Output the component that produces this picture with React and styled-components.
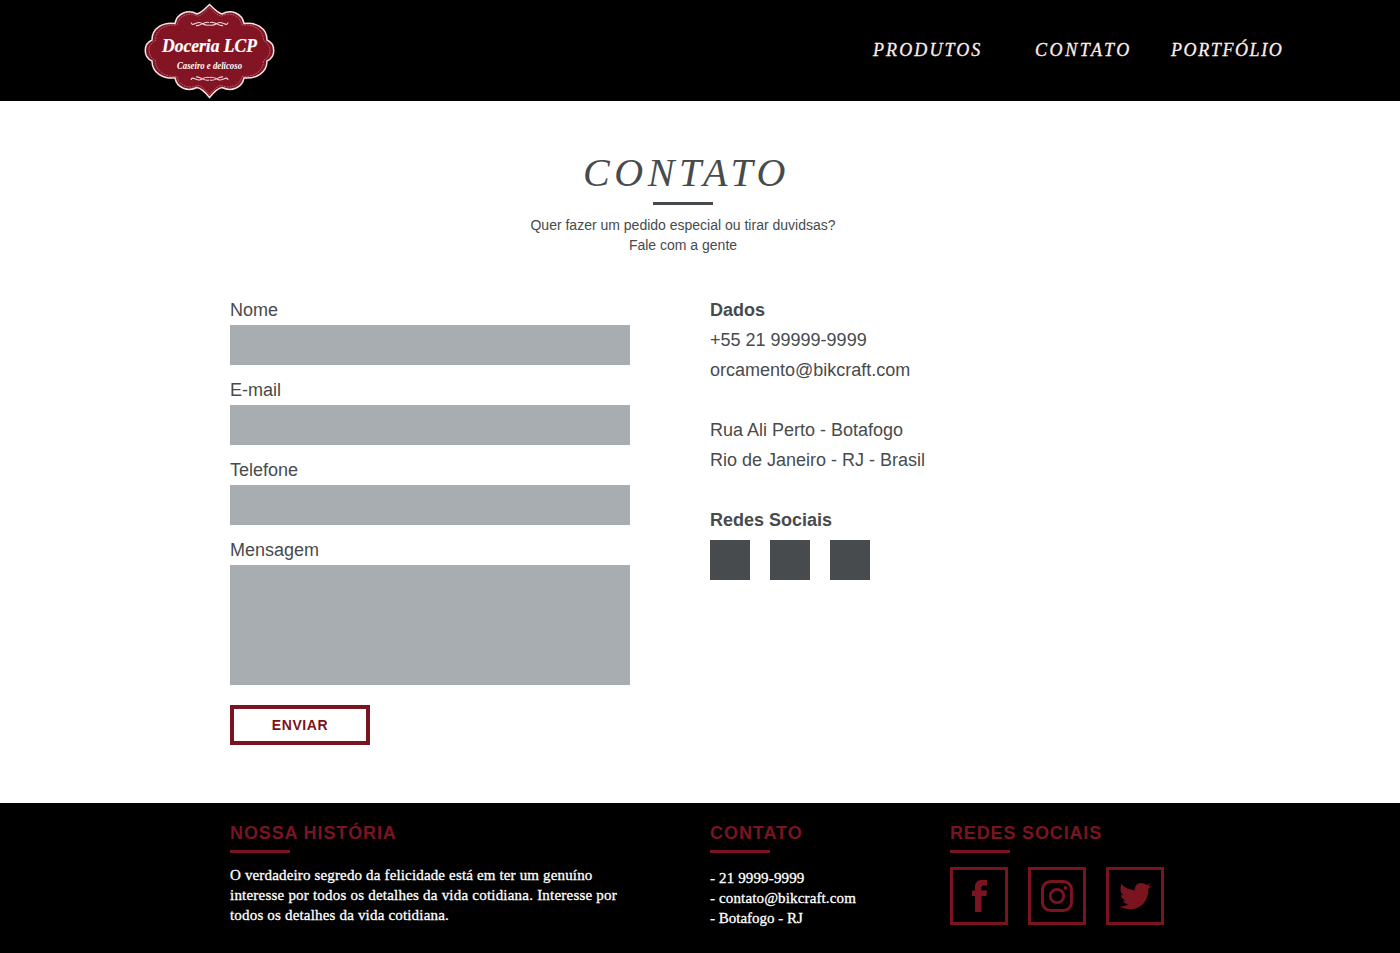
import React from "react";
import styled, { createGlobalStyle } from "styled-components";

const wine = "#7b1421";
const ink = "#474b4d";

const Global = createGlobalStyle`
  * { box-sizing: border-box; margin: 0; padding: 0; }
  body { background: #fff; font-family: "Liberation Sans", Arial, sans-serif; color: ${ink}; }
`;
const Page = styled.div`
  width: 1400px; height: 953px; overflow: hidden;
  display: flex; flex-direction: column;
`;
const Header = styled.header`
  height: 101px; background: #000; display: flex; align-items: flex-start;
  justify-content: space-between; padding: 0 117px 0 143px;
`;
const Logo = styled.svg`
  display: block; width: 133px; height: 100px;
`;
const Nav = styled.nav`
  display: flex; padding-top: 39px;
`;
const NavLink = styled.a`
  width: ${(p) => p.$width}px;
  font: italic 18px/22px "Lucida Calligraphy", "Liberation Serif", serif;
  letter-spacing: ${(p) => p.$spacing}px; padding-left: 1px;
  color: #fdecec; -webkit-text-stroke: 0.3px #fdecec; white-space: nowrap;
`;
const Main = styled.main`
  height: 702px;
`;
const Intro = styled.section`
  width: 400px; margin-left: 483px; padding-top: 45px; height: 194px;
  display: flex; flex-direction: column; align-items: center;
`;
const Title = styled.h1`
  font: italic 400 40px/54px "Lucida Calligraphy", "Liberation Serif", serif;
  letter-spacing: 4.6px; padding-left: 7px; margin-bottom: 2px; white-space: nowrap;
`;
const Rule = styled.div`
  width: 60px; height: 3px; background: ${(p) => p.$color};
`;
const Lead = styled.p`
  font-size: 14px; line-height: 20px; text-align: center; margin-top: 10px;
`;
const Columns = styled.div`
  display: grid; grid-template-columns: 400px 400px; column-gap: 80px; padding-left: 230px;
`;
const Form = styled.form`
  display: flex; flex-direction: column;
`;
const Label = styled.label`
  font-size: 18px; line-height: 30px;
`;
const Field = styled.input`
  display: block; width: 400px; height: 40px; border: 0; border-radius: 0;
  background: #a8adb1; margin-bottom: 10px;
`;
const Message = styled.textarea`
  display: block; width: 400px; height: 120px; border: 0; resize: none;
  background: #a8adb1; margin-bottom: 20px;
`;
const Submit = styled.button`
  width: 140px; height: 40px; border: 4px solid ${wine}; background: #fff; color: ${wine};
  font: bold 14px/20px "Liberation Sans", Arial, sans-serif; letter-spacing: 0.6px;
`;
const Details = styled.address`
  font-style: normal; font-size: 18px; line-height: 30px;
`;
const DetailsTitle = styled.h2`
  font-size: 18px; line-height: 30px; font-weight: bold;
`;
const Lines = styled.p`
  margin-bottom: 30px;
`;
const Squares = styled.div`
  display: flex; gap: 20px; padding-top: 5px;
`;
const Square = styled.span`
  width: 40px; height: 40px; background: ${ink};
`;
const Footer = styled.footer`
  height: 150px; background: #000; display: grid;
  grid-template-columns: 480px 240px 300px; padding: 20px 0 0 230px;
`;
const FooterTitle = styled.h3`
  color: ${wine}; font-size: 18px; line-height: 20px; letter-spacing: ${(p) => p.$spacing}px;
  margin-bottom: 7px; white-space: nowrap;
`;
const FooterText = styled.p`
  color: #fff; font: 15px/20px Georgia, "Liberation Serif", serif;
  -webkit-text-stroke: 0.3px #fff; margin-top: ${(p) => p.$top}px;
`;
const Line = styled.span`
  display: block; white-space: nowrap; letter-spacing: ${(p) => p.$spacing}px;
`;
const Social = styled.div`
  display: flex; gap: 20px; margin-top: 14px;
`;
const SocialLink = styled.a`
  width: 58px; height: 58px; border: 3px solid ${wine}; display: block;
`;
const Icon = styled.svg`
  display: block; width: 52px; height: 52px; fill: ${wine};
`;

const badge =
  "M66.500 4.500C62 9 58 13 54 14C45 9 34 13 32 23.500C20 22 9 28 9 40C0 44 0 57 9 61C9 73 20 79 32 78C34 88 45 92 54 87.500C58 88 62 92 66.500 97.500C71 92 75 88 79 87.500C88 92 99 88 101 78C113 79 124 73 124 61C133 57 133 44 124 40C124 28 113 22 101 23.500C99 13 88 9 79 14C75 13 71 9 66.500 4.500Z";
const swash = "M48 22.500c1 4.500 5-.5 8.500 0c3 .4 5 4 10 2.500M53 25.600c5 .8 8-5 13-3";

const Brand = () => (
  <Logo viewBox="0 0 133 100">
    <path d={badge} fill="#821424" stroke="#f5e3e3" strokeWidth="1.500" />
    <path d={badge} fill="none" stroke="#c8818a" strokeWidth=".7" strokeDasharray="2 1"
      transform="translate(66.500 51) scale(.94) translate(-66.500 -51)" />
    <g fill="none" stroke="#f0d5d8" strokeWidth="1.100">
      <path d={swash} />
      <path d={swash} transform="translate(133 0) scale(-1 1)" />
      <path d={swash} transform="translate(0 102.500) scale(1 -1)" />
      <path d={swash} transform="translate(133 102.500) scale(-1 -1)" />
    </g>
    <g fill="#fff" stroke="#fff" fontFamily="Liberation Serif, serif" fontStyle="italic" fontWeight="bold">
      <text x="19" y="52" fontSize="18" strokeWidth=".2" textLength="95" lengthAdjust="spacingAndGlyphs">Doceria LCP</text>
      <text x="34" y="69" fontSize="10" strokeWidth="0" textLength="65" lengthAdjust="spacingAndGlyphs">Caseiro e delicoso</text>
    </g>
  </Logo>
);

export default function App() {
  return (
    <Page>
      <Global />
      <Header>
        <Brand />
        <Nav>
          <NavLink $width={162} $spacing={2.1}>PRODUTOS</NavLink>
          <NavLink $width={136} $spacing={2.6}>CONTATO</NavLink>
          <NavLink $width={113} $spacing={1.6}>PORTFÓLIO</NavLink>
        </Nav>
      </Header>
      <Main>
        <Intro>
          <Title>CONTATO</Title>
          <Rule $color={ink} />
          <Lead>Quer fazer um pedido especial ou tirar duvidsas?<br />Fale com a gente</Lead>
        </Intro>
        <Columns>
          <Form>
            <Label htmlFor="nome">Nome</Label>
            <Field id="nome" />
            <Label htmlFor="email">E-mail</Label>
            <Field id="email" />
            <Label htmlFor="telefone">Telefone</Label>
            <Field id="telefone" />
            <Label htmlFor="mensagem">Mensagem</Label>
            <Message id="mensagem" />
            <Submit type="button">ENVIAR</Submit>
          </Form>
          <Details>
            <DetailsTitle>Dados</DetailsTitle>
            <Lines>+55 21 99999-9999<br />orcamento@bikcraft.com</Lines>
            <Lines>Rua Ali Perto - Botafogo<br />Rio de Janeiro - RJ - Brasil</Lines>
            <DetailsTitle>Redes Sociais</DetailsTitle>
            <Squares><Square /><Square /><Square /></Squares>
          </Details>
        </Columns>
      </Main>
      <Footer>
        <section>
          <FooterTitle $spacing={0.88}>NOSSA HISTÓRIA</FooterTitle>
          <Rule $color={wine} />
          <FooterText $top={12}>
            <Line $spacing={0.155}>O verdadeiro segredo da felicidade está em ter um genuíno</Line>
            <Line $spacing={0.215}>interesse por todos os detalhes da vida cotidiana. Interesse por</Line>
            <Line $spacing={0.18}>todos os detalhes da vida cotidiana.</Line>
          </FooterText>
        </section>
        <section>
          <FooterTitle $spacing={0.95}>CONTATO</FooterTitle>
          <Rule $color={wine} />
          <FooterText $top={15}>
            <Line $spacing={0.14}>- 21 9999-9999</Line>
            <Line $spacing={0.14}>- contato@bikcraft.com</Line>
            <Line $spacing={0}>- Botafogo - RJ</Line>
          </FooterText>
        </section>
        <section>
          <FooterTitle $spacing={0.85}>REDES SOCIAIS</FooterTitle>
          <Rule $color={wine} />
          <Social>
            <SocialLink>
              <Icon viewBox="0 0 52 52">
                <path d="M22 42V26h-3v-5.500h3v-3.300C22 12.500 24.500 10 29 10h5v5.500h-3c-2 0-2.500.800-2.500 2.300V20.500h5.500L33.300 26h-4.800v16z" />
              </Icon>
            </SocialLink>
            <SocialLink>
              <Icon viewBox="0 0 52 52">
                <rect x="11.500" y="11.500" width="29" height="29" rx="8" fill="none" stroke={wine} strokeWidth="3" />
                <circle cx="26" cy="26" r="6.700" fill="none" stroke={wine} strokeWidth="2.800" />
                <circle cx="34.500" cy="17.800" r="1.900" />
              </Icon>
            </SocialLink>
            <SocialLink>
              <Icon viewBox="0 0 52 52">
                <path d="M12 13.500C15 17.500 20.500 19.500 25.800 20.500C25.500 16 28 13 32 13C34.500 13 36.500 14 37.500 15.200L41.300 13.300L39.600 16.300L42.300 16L39.300 19.200C39.500 25 37.500 30.500 33.500 34.500C27.500 40.500 17.500 40.500 10.300 36.300C13.500 36.600 16.500 36 19 34.200C16.500 33.800 14.800 32.700 14 30.800L16.700 30.500C13.700 29.500 12 27.500 11.800 24.700L14.300 25.300C11.800 23 11 20.500 11.700 17.700Z" />
              </Icon>
            </SocialLink>
          </Social>
        </section>
      </Footer>
    </Page>
  );
}
